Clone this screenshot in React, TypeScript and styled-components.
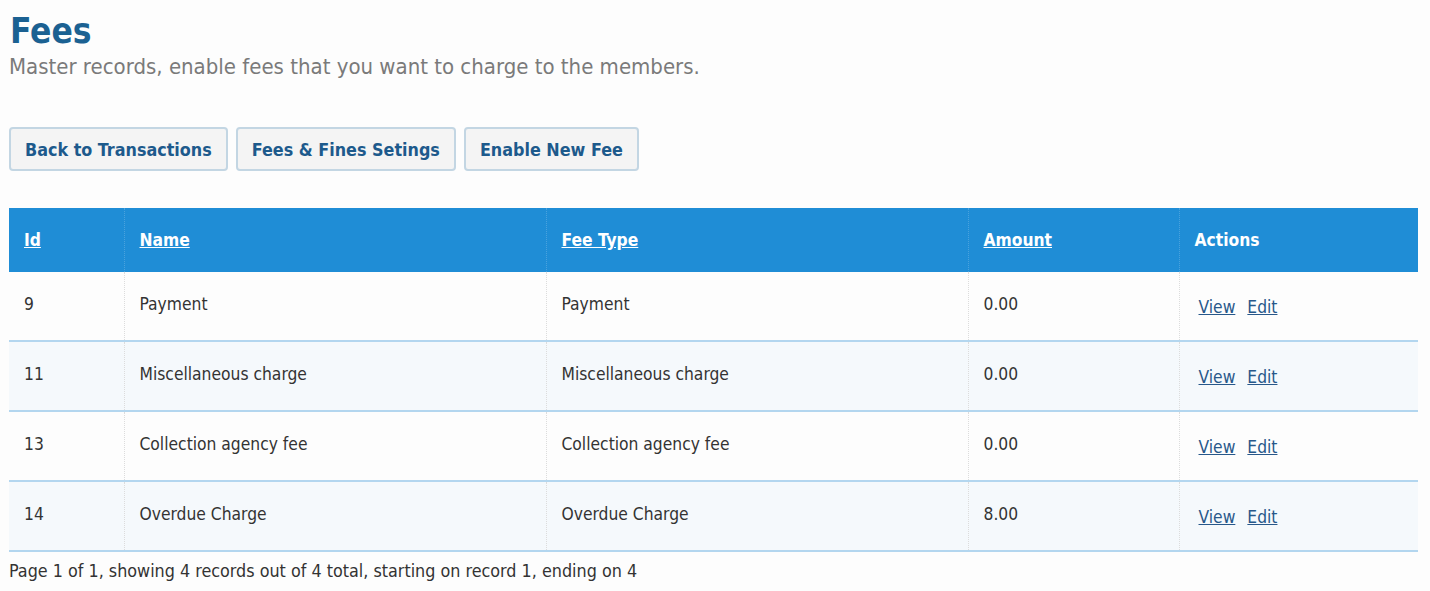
import * as React from "react";
import styled, { createGlobalStyle } from "styled-components";

const GlobalStyle = createGlobalStyle`
  body {
    margin: 0;
    background: #fdfdfd;
    font-family: "DejaVu Sans Condensed", "DejaVu Sans", sans-serif;
    color: #333;
  }
`;

const Page = styled.div`
  padding: 0 12px 0 9px;
`;

const Title = styled.h1`
  margin: 0;
  padding: 9px 0 0 1px;
  font-size: 35px;
  line-height: 44px;
  font-weight: 700;
  color: #1b6192;
`;

const Subtitle = styled.p`
  margin: 0;
  font-size: 22px;
  line-height: 28px;
  color: #7a7a7a;
`;

const Toolbar = styled.div`
  display: flex;
  gap: 8px;
  margin-top: 46px;
`;

const Button = styled.button`
  height: 44px;
  padding: 0 14px;
  background: #f4f4f4;
  border: 2px solid #c3d6e3;
  border-radius: 4px;
  font-family: "DejaVu Sans Condensed", "DejaVu Sans", sans-serif;
  font-size: 17.8px;
  font-weight: 700;
  color: #1d5a8c;
  cursor: pointer;
`;

const Table = styled.table`
  width: 100%;
  margin-top: 37px;
  border-collapse: collapse;
  table-layout: fixed;
  font-size: 17.3px;
`;

const HeadCell = styled.th`
  height: 64px;
  padding: 0 15px;
  background: #1f8dd6;
  color: #fff;
  text-align: left;
  font-weight: 700;
  border-left: 1px dotted #4aa2dd;
  &:first-child {
    border-left: none;
  }
`;

const SortLink = styled.a`
  color: #fff;
  text-decoration: underline;
`;

const Row = styled.tr<{ $odd: boolean }>`
  background: ${(p) => (p.$odd ? "#f5f9fc" : "#fdfdfd")};
  border-bottom: 2px solid #b3d6ef;
`;

const Cell = styled.td`
  height: 64px;
  padding: 0 15px 4px;
  border-left: 1px dotted #dcdcdc;
  vertical-align: middle;
  &:first-child {
    border-left: none;
  }
`;

const ActionLink = styled.a`
  display: inline-block;
  margin: 6px 12px 0 4px;
  color: #28588a;
  text-decoration: underline;
  & + & {
    margin-left: 0;
  }
`;

const Summary = styled.div`
  margin-top: 8px;
  font-size: 17.8px;
  color: #333;
`;

const fees = [
  { id: 9, name: "Payment", type: "Payment", amount: "0.00" },
  { id: 11, name: "Miscellaneous charge", type: "Miscellaneous charge", amount: "0.00" },
  { id: 13, name: "Collection agency fee", type: "Collection agency fee", amount: "0.00" },
  { id: 14, name: "Overdue Charge", type: "Overdue Charge", amount: "8.00" },
];

const columns = [115, 422, 422, 211, 239];

const App: React.FC = () => {
  return (
    <Page>
      <GlobalStyle />
      <Title>Fees</Title>
      <Subtitle>Master records, enable fees that you want to charge to the members.</Subtitle>
      <Toolbar>
        <Button>Back to Transactions</Button>
        <Button>Fees &amp; Fines Setings</Button>
        <Button>Enable New Fee</Button>
      </Toolbar>
      <Table>
        <colgroup>
          {columns.map((w, i) => (
            <col key={i} style={{ width: w }} />
          ))}
        </colgroup>
        <thead>
          <tr>
            <HeadCell><SortLink href="#">Id</SortLink></HeadCell>
            <HeadCell><SortLink href="#">Name</SortLink></HeadCell>
            <HeadCell><SortLink href="#">Fee Type</SortLink></HeadCell>
            <HeadCell><SortLink href="#">Amount</SortLink></HeadCell>
            <HeadCell>Actions</HeadCell>
          </tr>
        </thead>
        <tbody>
          {fees.map((f, i) => (
            <Row key={f.id} $odd={i % 2 === 1}>
              <Cell>{f.id}</Cell>
              <Cell>{f.name}</Cell>
              <Cell>{f.type}</Cell>
              <Cell>{f.amount}</Cell>
              <Cell>
                <ActionLink href="#">View</ActionLink>
                <ActionLink href="#">Edit</ActionLink>
              </Cell>
            </Row>
          ))}
        </tbody>
      </Table>
      <Summary>Page 1 of 1, showing 4 records out of 4 total, starting on record 1, ending on 4</Summary>
    </Page>
  );
};

export default App;
